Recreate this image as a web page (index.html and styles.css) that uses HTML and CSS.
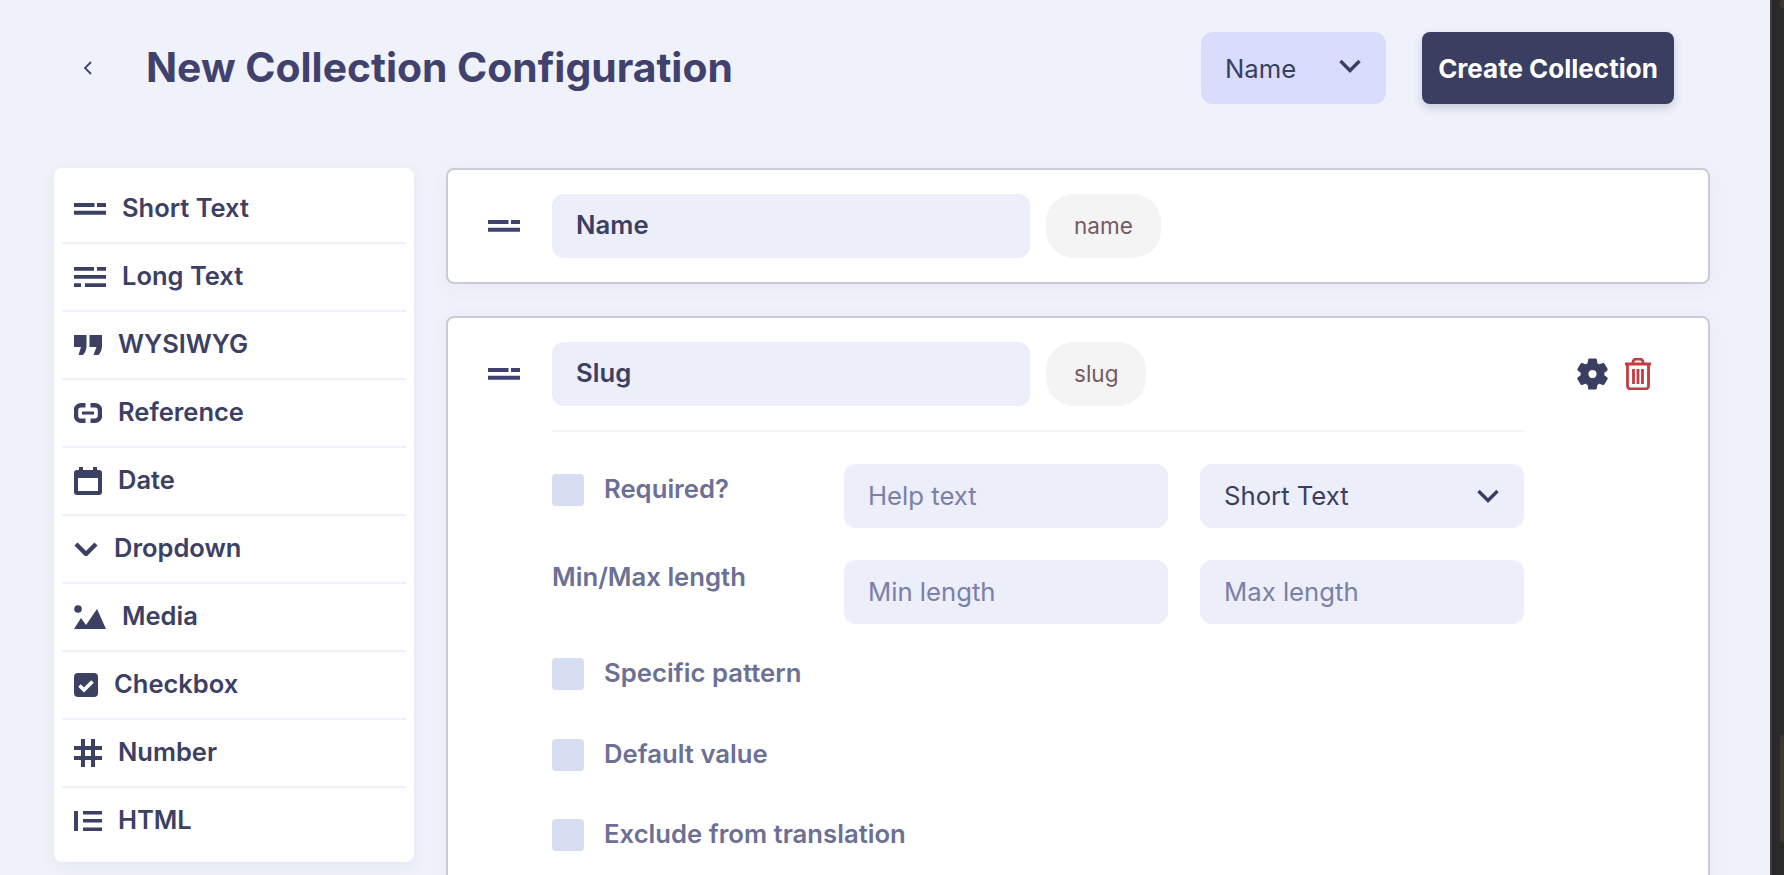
FILE: index.html
```html
<!DOCTYPE html>
<html lang="en">
<head>
<meta charset="utf-8">
<title>New Collection Configuration</title>
<link rel="stylesheet" href="styles.css">
</head>
<body>
<div class="app">
  <div class="page">
    <header class="topbar">
      <svg class="back" viewBox="0 0 9 14"><path d="M8 1L2 7l6 6"/></svg>
      <h1 class="title">New Collection Configuration</h1>
      <div class="select-name"><span>Name</span><svg class="chev" viewBox="0 0 22 14"><path d="M1.500 2l9.500 9.500L20.500 2"/></svg></div>
      <button class="create">Create Collection</button>
    </header>
    <div class="workspace">
      <nav class="palette">
        <div class="type"><svg class="ic w32 h12" viewBox="0 0 32 12"><path d="M0 0h20.500v4H0zM23 0h9v4h-9zM0 7.800h32v4H0z"/></svg><span>Short Text</span></div>
        <div class="type"><svg class="ic w32 h20" viewBox="0 0 32 20"><path d="M0 0h20v3.700H0zM23 0h9v3.700h-9zM0 8h32v3.700H0zM0 16.300h7V20H0zM11 16.300h21V20H11z"/></svg><span>Long Text</span></div>
        <div class="type"><svg class="ic w28 h20" viewBox="0 0 28 20"><path d="M0 0h12.500v11Q12.500 16 9 20H4.500L7 12H0zM15.500 0H28v11Q28 16 24.500 20H19.500L22.500 12h-7z"/></svg><span>WYSIWYG</span></div>
        <div class="type"><svg class="ic w28 h20" viewBox="0 0 28 20"><path class="line" d="M11.500 2.200H7a5 5 0 0 0-5 5v5.600a5 5 0 0 0 5 5h4.500M16.500 2.200H21a5 5 0 0 1 5 5v5.600a5 5 0 0 1-5 5h-4.500"/><path d="M8 8.500h12v3H8z"/></svg><span>Reference</span></div>
        <div class="type"><svg class="ic w28 h28" viewBox="0 0 28 28"><path fill-rule="evenodd" d="M5 0h4v3h10V0h4v3h2a3 3 0 0 1 3 3v19a3 3 0 0 1-3 3H3a3 3 0 0 1-3-3V6a3 3 0 0 1 3-3h2zM4 11v13h20V11z"/></svg><span>Date</span></div>
        <div class="type"><svg class="ic w24 h14" viewBox="0 0 24 14"><path class="line" d="M2 2l10 10L22 2"/></svg><span>Dropdown</span></div>
        <div class="type"><svg class="ic w32 h24" viewBox="0 0 32 24"><circle cx="4" cy="4" r="3.800"/><path d="M0 24l7-11 5 7L23 4l9 20z"/></svg><span>Media</span></div>
        <div class="type"><svg class="ic w24 h24" viewBox="0 0 24 24"><rect width="24" height="24" rx="4"/><path class="tick" d="M5.500 12.500l4.500 4.500 8.500-8.500"/></svg><span>Checkbox</span></div>
        <div class="type"><svg class="ic w28 h28" viewBox="0 0 28 28"><path d="M7 0h4v7h6V0h4v7h7v4h-7v6h7v4h-7v7h-4v-7h-6v7H7v-7H0v-4h7v-6H0V7h7zM11 11v6h6v-6z" fill-rule="evenodd"/></svg><span>Number</span></div>
        <div class="type"><svg class="ic w28 h20" viewBox="0 0 28 20"><path d="M0 0h4v20H0zM9 0h19v3.500H9zM9 8h19v3.500H9zM9 16.500h19V20H9z"/></svg><span>HTML</span></div>
      </nav>
      <main class="fields">
        <section class="card">
          <svg class="drag" viewBox="0 0 32 12"><path d="M0 0h20.500v4H0zM23 0h9v4h-9zM0 7.800h32v4H0z"/></svg>
          <div class="card-body">
            <div class="head-row">
              <div class="field-name">Name</div>
              <div class="pill pill-name">name</div>
            </div>
          </div>
        </section>
        <section class="card">
          <svg class="drag" viewBox="0 0 32 12"><path d="M0 0h20.500v4H0zM23 0h9v4h-9zM0 7.800h32v4H0z"/></svg>
          <div class="card-body">
            <div class="head-row">
              <div class="field-name">Slug</div>
              <div class="pill">slug</div>
            </div>
            <div class="settings">
              <div class="grid">
                <label class="check top"><span class="box"></span><span class="caption">Required?</span></label>
                <div class="control placeholder">Help text</div>
                <div class="control filled"><span>Short Text</span><svg class="chev" viewBox="0 0 22 14"><path d="M1.500 2l9.500 9.500L20.500 2"/></svg></div>
                <div class="caption minmax">Min/Max length</div>
                <div class="control placeholder">Min length</div>
                <div class="control placeholder">Max length</div>
              </div>
              <div class="checks">
                <label class="check"><span class="box"></span><span class="caption">Specific pattern</span></label>
                <label class="check"><span class="box"></span><span class="caption">Default value</span></label>
                <label class="check"><span class="box"></span><span class="caption">Exclude from translation</span></label>
              </div>
            </div>
          </div>
          <div class="actions">
            <svg class="gear" viewBox="2 2 20 20"><path fill-rule="evenodd" d="M19.140 12.940c.04-.3.060-.61.060-.94 0-.32-.02-.64-.07-.94l2.030-1.580c.18-.14.230-.41.120-.61l-1.920-3.320c-.12-.22-.37-.29-.59-.22l-2.390.96c-.5-.38-1.030-.7-1.620-.94L14.400 2.810c-.04-.24-.24-.41-.48-.41h-3.840c-.24 0-.43.17-.47.41L9.250 5.350c-.59.24-1.130.57-1.620.94L5.240 5.330c-.22-.08-.47 0-.59.22L2.740 8.870c-.12.210-.08.47.12.610l2.030 1.580C4.840 11.360 4.800 11.690 4.800 12s.02.64.07.94l-2.030 1.580c-.18.14-.23.41-.12.61l1.920 3.320c.12.22.37.29.59.22l2.390-.96c.5.38 1.030.7 1.620.94l.36 2.540c.05.24.24.41.48.41h3.840c.24 0 .44-.17.47-.41l.36-2.540c.59-.24 1.130-.56 1.620-.94l2.390.96c.22.08.47 0 .59-.22l1.920-3.320c.12-.22.07-.47-.12-.61l-2.010-1.580zM12 15.100c-1.710 0-3.100-1.390-3.100-3.100s1.390-3.100 3.100-3.100 3.100 1.390 3.100 3.100-1.390 3.100-3.100 3.100z"/></svg>
            <svg class="trash" viewBox="0 0 28 32"><path d="M1 6h26M9 6V4a3 3 0 0 1 3-3h4a3 3 0 0 1 3 3v2M3.500 6v22a3 3 0 0 0 3 3h15a3 3 0 0 0 3-3V6M9.500 11v15M14 11v15M18.500 11v15"/></svg>
          </div>
        </section>
      </main>
    </div>
  </div>
  <div class="scroller"><span class="thumb thumb-top"></span><span class="thumb thumb-low"></span></div>
</div>
</body>
</html>
```

FILE: styles.css
```css
* { box-sizing: border-box; }
html, body { margin: 0; height: 100%; overflow: hidden; }
body { font-family: "Inter", "Liberation Sans", sans-serif; background: #eff2fa; color: #3c4063; }

.app { display: flex; height: 875px; overflow: hidden; }
.page { flex: 1; min-width: 0; background: #eff2fa; overflow: hidden; }
.scroller { position: relative; width: 14px; background: #2a2a2a; border-left: 2px solid #3d3d42; }
.thumb { position: absolute; right: 0; width: 4px; background: #3a382f; border-radius: 3px 0 0 3px; }
.thumb-top { top: 0; height: 8px; }
.thumb-low { top: 735px; height: 107px; }

.topbar { display: flex; align-items: center; height: 72px; margin: 32px 96px 64px 83px; }
.back { width: 9px; height: 14px; margin-right: 54px; fill: none; stroke: #41416e; stroke-width: 1.800; }
.title { margin: 0 auto 2px 0; font-size: 40.850px; font-weight: 700; color: #41416e; line-height: 48px; }
.select-name { display: flex; align-items: center; justify-content: space-between; width: 185px; height: 72px; padding: 0 25px 0 24px; background: #d9ddfb; border-radius: 12px; font-size: 25.700px; color: #3a3f62; }
.chev { width: 22px; height: 14px; fill: none; stroke: #3a3f62; stroke-width: 3.400; }
.select-name .chev { margin-top: -4px; }
.create { width: 252px; height: 72px; margin-left: 36px; padding: 0; border: 0; border-radius: 8px; background: #3a3f62; color: #fff; font: 700 26px "Inter", sans-serif; box-shadow: 0 4px 10px rgba(58, 63, 98, .22); }

.workspace { display: flex; align-items: flex-start; gap: 32px; padding-left: 54px; }
.palette { flex: none; width: 360px; padding: 8px; background: #fff; border-radius: 8px; box-shadow: 0 4px 16px rgba(70, 80, 150, .07); }
.type { display: flex; align-items: center; gap: 16px; height: 68px; padding: 0 0 0 12px; border-bottom: 2px solid #eef0fb; font-size: 25.500px; font-weight: 600; color: #3c4063; }
.type:last-child { height: 66px; border-bottom: 0; }
.type span { margin-top: -3px; }
.ic { flex: none; fill: #3c4063; }
.ic .line { fill: none; stroke: #3c4063; stroke-width: 4.400; }
.ic .tick { fill: none; stroke: #fff; stroke-width: 3.600; }
.w24 { width: 24px; } .w28 { width: 28px; } .w32 { width: 32px; }
.h12 { height: 12px; } .h14 { height: 14px; } .h20 { height: 20px; } .h24 { height: 24px; } .h28 { height: 28px; }

.fields { flex: none; display: flex; flex-direction: column; gap: 32px; width: 1264px; }
.card { display: flex; align-items: flex-start; padding: 24px 0 24px 40px; background: #fff; border: 2px solid #c8ccd5; border-radius: 8px; box-shadow: 0 4px 20px rgba(70, 80, 150, .05); }
.drag { flex: none; width: 32px; height: 12px; margin: 26px 32px 0 0; fill: #3f4270; }
.card-body { flex: none; width: 972px; }
.head-row { display: flex; gap: 16px; }
.field-name { display: flex; align-items: center; width: 478px; height: 64px; padding: 0 24px 4px; background: #eceef9; border-radius: 12px; font-size: 25.700px; font-weight: 600; color: #3c4063; }
.pill { display: flex; align-items: center; height: 64px; padding: 0 28px 2px; background: #f4f4f5; border-radius: 28px; font-size: 22.500px; color: #755a5f; }

.settings { margin-top: 24px; padding-top: 32px; border-top: 2px solid #f1f2f7; }
.grid { display: grid; grid-template-columns: 292px 356px 324px; row-gap: 32px; }
.grid > .control:nth-child(3n+2) { width: 324px; }
.control { display: flex; align-items: center; justify-content: space-between; height: 64px; padding: 0 24px 1px; background: #eceef9; border-radius: 12px; font-size: 25.700px; }
.placeholder { color: #7a80a8; }
.filled { color: #3a3f62; padding-right: 25px; }
.filled .chev { margin-top: 0; }
.check { display: flex; align-items: center; gap: 20px; height: 32px; }
.check.top { margin-top: 10px; }
.box { flex: none; width: 32px; height: 32px; background: #d6ddf1; border-radius: 4px; }
.caption { margin-top: -3px; font-size: 25.700px; font-weight: 600; color: #6c7094; }
.minmax { margin-top: 1px; line-height: 32px; }
.checks { display: flex; flex-direction: column; gap: 48.500px; margin-top: 34px; padding-bottom: 40px; }

.actions { flex: none; display: flex; gap: 16px; margin: 16px 0 0 53px; }
.gear { width: 31px; height: 32px; fill: #3a3f62; stroke: #3a3f62; stroke-width: .9; stroke-linejoin: round; }
.trash { width: 28px; height: 32px; fill: none; stroke: #c53b42; stroke-width: 2.800; }
```
